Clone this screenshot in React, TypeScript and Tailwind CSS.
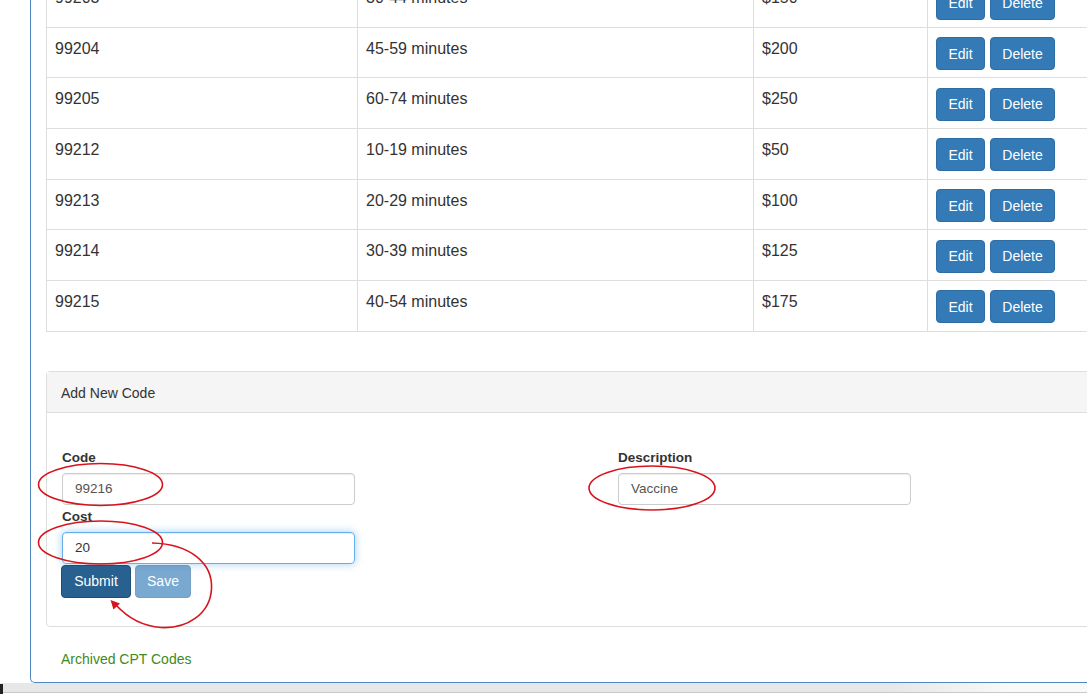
import React from "react";

const rows = [
  { code: "99203", desc: "30-44 minutes", cost: "$150" },
  { code: "99204", desc: "45-59 minutes", cost: "$200" },
  { code: "99205", desc: "60-74 minutes", cost: "$250" },
  { code: "99212", desc: "10-19 minutes", cost: "$50" },
  { code: "99213", desc: "20-29 minutes", cost: "$100" },
  { code: "99214", desc: "30-39 minutes", cost: "$125" },
  { code: "99215", desc: "40-54 minutes", cost: "$175" },
];

const btn =
  "h-[33px] rounded-[4px] border border-[#2e6da4] bg-[#337ab7] text-white text-[14px] leading-none flex items-center justify-center";

function Annotations() {
  // red hand-drawn marks over the form
  return (
    <svg className="absolute inset-0 pointer-events-none" width="1087" height="694" viewBox="0 0 1087 694">
      <g fill="none" stroke="#d8131c" strokeWidth="1.6">
        <ellipse cx="100.5" cy="484.5" rx="62" ry="21" />
        <ellipse cx="100.5" cy="542.5" rx="62" ry="21.5" />
        <ellipse cx="652" cy="488" rx="63" ry="22" />
        <path d="M152 543 C190 544 213 563 211.5 589 C210 614 187 629 161 627.5 C141 626 126 616 116 605" />
      </g>
      <polygon points="110.5,600 120,603.5 113.5,609.5" fill="#d8131c" />
    </svg>
  );
}

export default function App() {
  return (
    <div className="relative w-[1087px] h-[694px] overflow-hidden bg-white text-[#333] font-['Liberation_Sans',Arial,sans-serif]">
      <div className="ml-[30px] w-[1120px] border-l border-b border-[#4f86bf] rounded-bl-[5px] px-[15px] pb-[13px]">
        {/* CPT code table */}
        <div className="-mt-[23px] border-l border-[#ddd] text-[16px]">
          {rows.map((r) => (
            <div key={r.code} className="flex h-[50.67px] border-b border-[#ddd]">
              <div className="w-[311px] shrink-0 border-r border-[#ddd] px-[8px] pt-[9px] leading-[23px]">{r.code}</div>
              <div className="w-[396px] shrink-0 border-r border-[#ddd] px-[8px] pt-[9px] leading-[23px]">{r.desc}</div>
              <div className="w-[174px] shrink-0 border-r border-[#ddd] px-[8px] pt-[9px] leading-[23px]">{r.cost}</div>
              <div className="flex-1 px-[8px] pt-[9.5px]">
                <div className="flex gap-[5px]">
                  <button className={`${btn} w-[49px]`}>Edit</button>
                  <button className={`${btn} w-[65px]`}>Delete</button>
                </div>
              </div>
            </div>
          ))}
        </div>

        {/* Add New Code panel */}
        <div className="mt-[39.5px] border border-[#ddd] rounded-[4px]">
          <div className="h-[41px] bg-[#f5f5f5] border-b border-[#ddd] pl-[14px] pt-[3px] flex items-center text-[14px]">
            Add New Code
          </div>
          <div className="px-[15px] pt-[34.5px] pb-[28px] flex">
            <div className="w-[556px] shrink-0">
              <label className="block font-bold text-[13.5px] leading-[19px] mb-[6px]">Code</label>
              <input
                readOnly
                value="99216"
                className="block w-[293px] h-[32.5px] rounded-[4px] border border-[#ccc] px-[12px] text-[13.5px] text-[#555] shadow-[inset_0_1px_1px_rgba(0,0,0,0.075)] outline-none"
              />
              <label className="block font-bold text-[13.5px] leading-[19px] mt-[1.5px] mb-[6px]">Cost</label>
              <input
                readOnly
                value="20"
                className="block w-[293px] h-[32.5px] rounded-[4px] border border-[#66afe9] px-[12px] text-[13.5px] text-[#333] shadow-[inset_0_1px_1px_rgba(0,0,0,0.075),0_0_8px_rgba(102,175,233,0.6)] outline-none"
              />
              <div className="flex gap-[4px] -ml-[1px] mt-[0.5px]">
                <button className="h-[33px] w-[70px] rounded-[4px] border border-[#204d74] bg-[#286090] text-white text-[14px] flex items-center justify-center">
                  Submit
                </button>
                <button className="h-[33px] w-[56px] rounded-[4px] border border-[#2e6da4] bg-[#337ab7] opacity-65 text-white text-[14px] flex items-center justify-center">
                  Save
                </button>
              </div>
            </div>
            <div>
              <label className="block font-bold text-[13.5px] leading-[19px] mb-[6px]">Description</label>
              <input
                readOnly
                value="Vaccine"
                className="block w-[293px] h-[32.5px] rounded-[4px] border border-[#ccc] px-[12px] text-[13.5px] text-[#555] shadow-[inset_0_1px_1px_rgba(0,0,0,0.075)] outline-none"
              />
            </div>
          </div>
        </div>

        <div className="mt-[22.5px] pl-[15px] text-[14px] leading-[20px] text-[#3f8a22]">Archived CPT Codes</div>
      </div>

      <div className="h-[10px] border-b border-[#c9c9c9] bg-[linear-gradient(to_right,#e6e7e8_0%,#e6e7e8_82%,#f9f9f9_93%)]" />
      <div className="absolute left-0 bottom-0 w-[3px] h-[10px] bg-[#222]" />

      <Annotations />
    </div>
  );
}
